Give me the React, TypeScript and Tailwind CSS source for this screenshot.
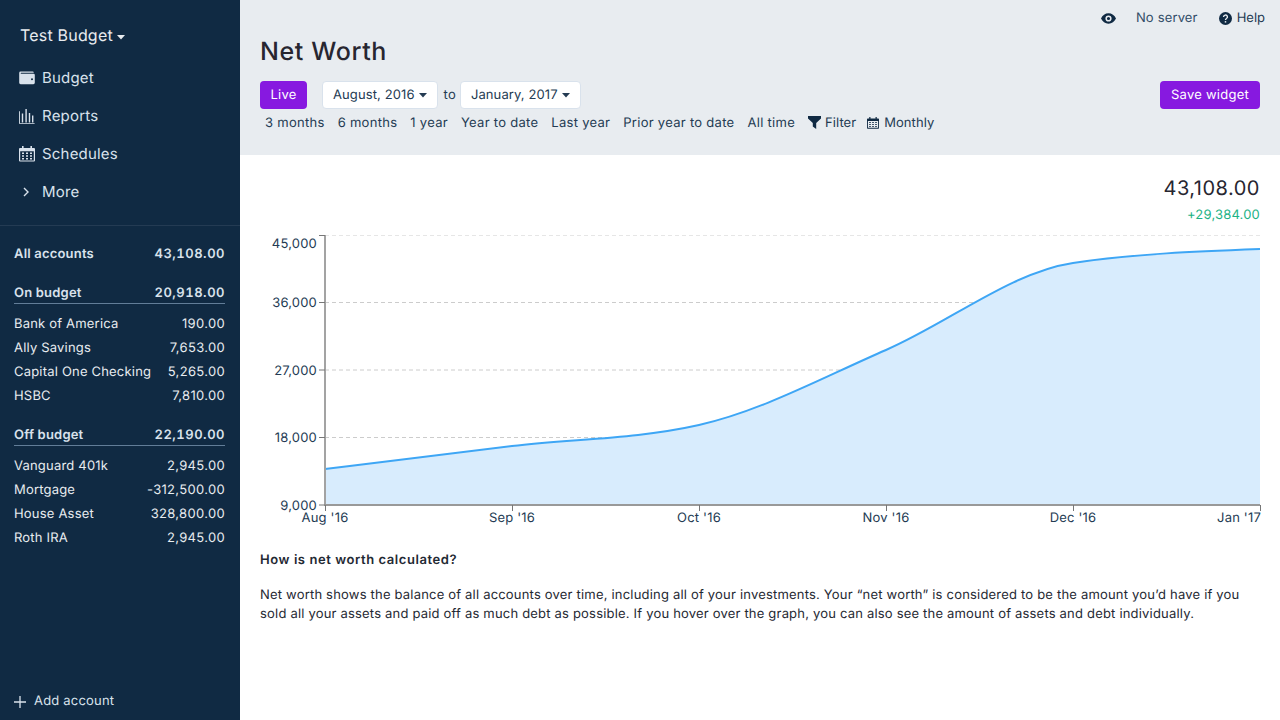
import React from 'react';

const Caret = ({ className = '' }: { className?: string }) => (
  <svg viewBox="0 0 8 5" width="8" height="5" className={className} fill="currentColor"><path d="M0 0h8L4 4.6z" /></svg>
);

const Wallet = () => (
  <svg viewBox="0 0 16 14" width="16" height="14" fill="currentColor">
    <path d="M1.6 0.6H13.6A1.2 1.2 0 0 1 14.8 1.8H2.2A0.5 0.5 0 0 0 2.2 2.8H14.6A1.2 1.2 0 0 1 15.8 4V11.8A1.4 1.4 0 0 1 14.4 13.2H1.6A1.4 1.4 0 0 1 0.2 11.8V2A1.4 1.4 0 0 1 1.6 0.6ZM13 7.2A1 1 0 1 0 13 9.2A1 1 0 1 0 13 7.2Z" fillRule="evenodd" />
  </svg>
);

const Bars = () => (
  <svg viewBox="0 0 16 16" width="16" height="16" fill="currentColor">
    <path d="M0 15.8H15.6V14.9H0.9V3.2H0ZM2.8 5.5H4.2V14.5H2.8ZM6.4 1H7.8V14.5H6.4ZM9.8 5H11.2V14.5H9.8ZM13 7.5H14.4V14.5H13Z" fillRule="evenodd" />
  </svg>
);

const Calendar = ({ size = 16 }: { size?: number }) => (
  <svg viewBox="0 0 16 16" width={size} height={size} fill="currentColor">
    <path fillRule="evenodd" d="M3 0H4.6V2H11.4V0H13V2H15A1 1 0 0 1 16 3V14.6A1 1 0 0 1 15 15.6H1A1 1 0 0 1 0 14.6V3A1 1 0 0 1 1 2H3ZM1.2 5.2V14.4H14.8V5.2Z" />
    <path d="M3 6.5H5V8H3ZM7 6.5H9V8H7ZM11 6.5H13V8H11ZM3 9.2H5V10.7H3ZM7 9.2H9V10.7H7ZM11 9.2H13V10.7H11ZM3 11.9H5V13.4H3ZM7 11.9H9V13.4H7ZM11 11.9H13V13.4H11Z" />
  </svg>
);

const Chevron = () => (
  <svg viewBox="0 0 8 10" width="8" height="10" fill="none" stroke="currentColor" strokeWidth="1.4"><path d="M2 1l4 4-4 4" /></svg>
);

const NavItem = ({ icon, label }: { icon: React.ReactNode; label: string }) => (
  <div className="flex h-[38px] items-center pl-[19px] text-[15px] text-[#d9e2ec]">
    <div className="flex w-[23px] items-center justify-start">{icon}</div>
    <span>{label}</span>
  </div>
);

const Row = ({ name, amount }: { name: string; amount: string }) => (
  <div className="flex h-6 items-center justify-between text-[13px] text-[#e8ecf0]">
    <span>{name}</span>
    <span className="tracking-[0.025em]">{amount}</span>
  </div>
);

const Group = ({ name, amount }: { name: string; amount: string }) => (
  <div className="flex h-[20px] items-center justify-between border-b border-[#627d98] text-[13px] font-semibold text-[#d9e2ec]">
    <span>{name}</span>
    <span className="tracking-[0.04em] tabular-nums">{amount}</span>
  </div>
);

const ranges = ['3 months', '6 months', '1 year', 'Year to date', 'Last year', 'Prior year to date', 'All time'];

const Select = ({ label }: { label: string }) => (
  <div className="flex h-7 items-center gap-1 rounded border border-[#d9e2ec] bg-white px-[10px] text-[13px] tracking-[0.008em] text-[#243b53]">
    <span className="pt-px">{label}</span>
    <Caret />
  </div>
);

const Chart = () => {
  const ys = [
    { y: 235.5, ty: 243, label: '45,000', grid: '#e6e6e6' },
    { y: 302.5, ty: 302.5, label: '36,000', grid: '#cccccc' },
    { y: 370, ty: 370, label: '27,000', grid: '#cccccc' },
    { y: 437.5, ty: 437.5, label: '18,000', grid: '#cccccc' },
    { y: 505, ty: 505, label: '9,000', grid: '' },
  ];
  const xs = [
    { x: 325, label: "Aug '16", a: 'middle' },
    { x: 512, label: "Sep '16", a: 'middle' },
    { x: 699, label: "Oct '16", a: 'middle' },
    { x: 886, label: "Nov '16", a: 'middle' },
    { x: 1073, label: "Dec '16", a: 'middle' },
    { x: 1261, label: "Jan '17", a: 'end' },
  ];
  const line =
    'M325 469C387.33 461.17 449.67 453.33 512 446C574.33 438.67 636.67 439 699 425C761.33 411 823.67 377 886 350C948.33 323 1010.67 272.33 1073 263C1135.33 253.67 1197.67 251.33 1260 249';
  return (
    <svg viewBox="260 225 1010 305" width="1010" height="305" className="block">
      {ys.map((t) =>
        t.grid ? <line key={t.y} x1="325" x2="1260" y1={t.y} y2={t.y} stroke={t.grid} strokeDasharray="4 3" /> : null
      )}
      <path d={`${line}L1260 505L325 505Z`} fill="#d8ecfd" />
      <path d={line} fill="none" stroke="#3ea6f5" strokeWidth="2" />
      <line x1="325" x2="325" y1="235" y2="506" stroke="#a3a3a3" strokeWidth="2" />
      <line x1="325" x2="1260" y1="505" y2="505" stroke="#999999" strokeWidth="2" />
      {ys.map((t) => (
        <g key={t.label}>
          <line x1="319" x2="325" y1={t.y} y2={t.y} stroke="#777777" />
          <text x="317" y={t.ty + 4.5} textAnchor="end" fontSize="13" fill="#243b53">{t.label}</text>
        </g>
      ))}
      {xs.map((t) => (
        <g key={t.label}>
          <line x1={Math.min(t.x, 1260) + 0.5} x2={Math.min(t.x, 1260) + 0.5} y1="505" y2="511" stroke="#777777" />
          <text x={t.x} y="522" textAnchor={t.a as 'middle' | 'end'} fontSize="13" fill="#243b53">{t.label}</text>
        </g>
      ))}
    </svg>
  );
};

export default function App() {
  return (
    <div className="flex h-[720px] w-[1280px] overflow-hidden bg-white font-['Inter',sans-serif] text-[13px] tracking-[0.015em] text-[#1f2933] [text-rendering:geometricPrecision]">
      <aside className="flex w-[240px] shrink-0 flex-col bg-[#102a43]">
        <div className="flex h-[60px] items-end gap-1 pb-[13px] pl-5 text-[16px] text-[#e8ecf0]">
          <span>Test Budget</span>
          <Caret className="mb-[7px]" />
        </div>
        <div className="-mt-px">
          <NavItem icon={<Wallet />} label="Budget" />
          <NavItem icon={<Bars />} label="Reports" />
          <NavItem icon={<Calendar />} label="Schedules" />
          <NavItem icon={<span className="pl-[3px]"><Chevron /></span>} label="More" />
        </div>
        <div className="mt-[14px] border-t border-[#243b53] px-[15px] pl-[14px] pt-[17px]">
          <div className="flex h-[24px] items-center justify-between text-[13px] font-semibold text-[#d9e2ec]">
            <span>All accounts</span>
            <span className="tracking-[0.04em] tabular-nums">43,108.00</span>
          </div>
          <div className="mt-[17px]"><Group name="On budget" amount="20,918.00" /></div>
          <div className="mt-[9px]">
            <Row name="Bank of America" amount="190.00" />
            <Row name="Ally Savings" amount="7,653.00" />
            <Row name="Capital One Checking" amount="5,265.00" />
            <Row name="HSBC" amount="7,810.00" />
          </div>
          <div className="mt-[17px]"><Group name="Off budget" amount="22,190.00" /></div>
          <div className="mt-[9px]">
            <Row name="Vanguard 401k" amount="2,945.00" />
            <Row name="Mortgage" amount="-312,500.00" />
            <Row name="House Asset" amount="328,800.00" />
            <Row name="Roth IRA" amount="2,945.00" />
          </div>
        </div>
        <div className="mt-auto flex h-[38px] items-center gap-2 pl-[14px] pt-[2px] text-[13px] text-[#d9e2ec]">
          <svg viewBox="0 0 12 12" width="12" height="12" stroke="currentColor" strokeWidth="1.3"><path d="M6 0v12M0 6h12" /></svg>
          <span>Add account</span>
        </div>
      </aside>
      <main className="flex min-w-0 flex-1 flex-col">
        <header className="h-[155px] bg-[#e8ecf0]">
          <div className="flex h-[37px] items-center justify-end pr-[15px] text-[#243b53]">
            <svg viewBox="0 0 16 11" width="15" height="11" fill="#102a43" className="mr-[20px]">
              <path fillRule="evenodd" d="M8 0C4.5 0 1.5 2.2 0 5.5C1.5 8.8 4.5 11 8 11S14.5 8.8 16 5.5C14.5 2.2 11.5 0 8 0ZM8 2.2A3.3 3.3 0 1 1 8 8.8A3.3 3.3 0 1 1 8 2.2ZM8 3.8A1.7 1.7 0 1 0 8 7.2A1.7 1.7 0 1 0 8 3.8Z" />
            </svg>
            <span className="mr-[21px] tracking-[0.012em] text-[#334e68]">No server</span>
            <svg viewBox="0 0 14 14" width="13" height="13" className="mr-[5px]">
              <circle cx="7" cy="7" r="7" fill="#102a43" />
              <path d="M4.9 5.4A2.1 2 0 1 1 8 7C7.3 7.4 7 7.7 7 8.6" fill="none" stroke="#e8ecf0" strokeWidth="1.5" />
              <rect x="6.2" y="9.8" width="1.6" height="1.6" fill="#e8ecf0" />
            </svg>
            <span className="tracking-normal">Help</span>
          </div>
          <h1 className="h-[44px] pl-5 text-[25px] font-[450] leading-[30px] tracking-[0.025em] text-[#272630]">Net Worth</h1>
          <div className="flex items-center pl-5 pr-5 text-[#243b53]">
            <div className="flex h-7 w-[47px] items-center justify-center rounded bg-[#8719e0] pt-px text-white">Live</div>
            <div className="ml-[15px]"><Select label="August, 2016" /></div>
            <span className="ml-[6px] mr-[4px] pt-px">to</span>
            <Select label="January, 2017" />
            <div className="ml-auto flex h-7 w-[100px] items-center justify-center rounded bg-[#8719e0] pt-px tracking-[0.02em] text-white">Save widget</div>
          </div>
          <div className="mt-1 flex h-[22px] items-center gap-[13px] pl-[25px] tracking-[0.022em] text-[#243b53]">
            {ranges.map((r) => <span key={r}>{r}</span>)}
            <span className="flex items-center gap-[4px] tracking-[0.005em]">
              <svg viewBox="0 0 13 13" width="13" height="13" fill="#102a43" className="-mt-[3px]"><path d="M0 0h13V2.5L8.2 7V13L4.8 10.5V7L0 2.5z" /></svg>
              Filter
            </span>
            <span className="-ml-[2px] flex items-center gap-[5px] tracking-[0.005em]">
              <span className="-mt-[2px] text-[#102a43]"><Calendar size={12} /></span>
              Monthly
            </span>
          </div>
        </header>
        <section className="flex flex-col px-5 pt-[21px]">
          <div className="self-end text-right">
            <div className="text-[20px] leading-[24px] tracking-[0.025em] text-[#272630]">43,108.00</div>
            <div className="mt-[7px] text-[13px] leading-[16px] text-[#1cb285]">+29,384.00</div>
          </div>
          <div className="-mr-[10px] mt-[2px] h-[305px]"><Chart /></div>
          <p className="mt-[21px] font-semibold tracking-[0.044em] text-[#1f2933]">How is net worth calculated?</p>
          <p className="mt-[15px] w-[990px] leading-[19px] tracking-[0.015em] text-[#1f2933]">
            Net worth shows the balance of all accounts over time, including all of your investments. Your “net worth” is considered to be the amount you’d have if you sold all your assets and paid off as much debt as possible. If you hover over the graph, you can also see the amount of assets and debt individually.
          </p>
        </section>
      </main>
    </div>
  );
}
